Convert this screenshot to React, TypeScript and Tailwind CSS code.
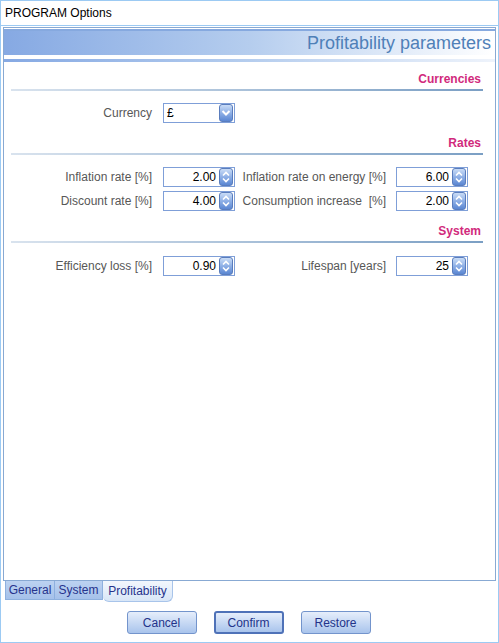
import React from 'react'

const font = { fontFamily: '"Liberation Sans", Arial, sans-serif' }

function Spinner() {
  return (
    <span className="w-[14px] h-[18px] rounded-[3px] border border-[#5a7dbd] bg-gradient-to-b from-[#c9dcf6] via-[#8fb0e6] to-[#5a86d2] flex flex-col items-center justify-center">
      <svg width="10" height="14" viewBox="0 0 10 14">
        <path d="M2 5.5 L5 2.5 L8 5.5" fill="none" stroke="#ffffff" strokeWidth="1.6" />
        <path d="M2 8.5 L5 11.5 L8 8.5" fill="none" stroke="#ffffff" strokeWidth="1.6" />
      </svg>
    </span>
  )
}

function DropButton() {
  return (
    <span className="w-[14px] h-[18px] rounded-[3px] border border-[#5a7dbd] bg-gradient-to-b from-[#c9dcf6] via-[#8fb0e6] to-[#5a86d2] flex items-center justify-center">
      <svg width="10" height="10" viewBox="0 0 10 10">
        <path d="M1.5 3 L5 6.5 L8.5 3" fill="none" stroke="#ffffff" strokeWidth="2" />
      </svg>
    </span>
  )
}

function NumField({ value }: { value: string }) {
  return (
    <div className="w-[72px] h-[20px] border border-[#7f9fd8] bg-white flex items-center justify-end pr-[1px]">
      <span className="text-[12px] text-black mr-[3px]">{value}</span>
      <Spinner />
    </div>
  )
}

function Section({ title }: { title: string }) {
  return (
    <div className="flex flex-col">
      <div className="h-[14px] leading-[14px] text-right pr-[2px] text-[12px] font-bold text-[#d12a7c]">{title}</div>
      <div className="mt-[3px] h-[2px] bg-gradient-to-r from-[#d9e3ee] to-[#7b9fc4]" />
    </div>
  )
}

function Row({ l1, v1, l2, v2 }: { l1: string; v1: string; l2?: string; v2?: string }) {
  return (
    <div className="flex items-center h-[20px] text-[12px] text-[#575757]">
      <span className="w-[141px] text-right whitespace-pre">{l1}</span>
      <div className="ml-[11px]">
        <NumField value={v1} />
      </div>
      {l2 && (
        <>
          <span className="w-[151px] text-right whitespace-pre">{l2}</span>
          <div className="ml-[10px]">
            <NumField value={v2 ?? ''} />
          </div>
        </>
      )}
    </div>
  )
}

export default function App() {
  return (
    <div className="w-[499px] h-[643px] bg-white border border-[#9ccaf3] flex flex-col" style={font}>
      <div className="h-[25px] pl-[4px] flex items-center text-[12px] text-black border-b border-[#9ccaf3]">
        PROGRAM Options
      </div>

      <div className="flex-1 flex flex-col px-[2px] pt-[1px]">
        <div className="h-[554px] border border-[#88a9d3] flex flex-col">
          <div className="mt-[1px] h-[26px] border-t-2 border-[#86a9df] bg-gradient-to-r from-[#86a9e3] via-[#b5cdee] to-white flex items-center justify-end pr-[4px]">
            <span className="text-[18px] text-[#4f80b8] leading-none">Profitability parameters</span>
          </div>
          <div className="mt-[4px] h-[3px] bg-gradient-to-r from-[#86a9e3] via-[#b5cdee] to-[#eef3fb]" />

          <div className="flex flex-col pl-[7px] pr-[12px] pt-[10px]">
            <Section title="Currencies" />
            <div className="mt-[12px] flex items-center h-[20px] text-[12px] text-[#575757]">
              <span className="w-[141px] text-right">Currency</span>
              <div className="ml-[11px] w-[72px] h-[20px] border border-[#7f9fd8] bg-white flex items-center justify-between pl-[3px] pr-[1px]">
                <span className="text-[12px] text-black">£</span>
                <DropButton />
              </div>
            </div>

            <div className="mt-[13px]">
              <Section title="Rates" />
            </div>
            <div className="mt-[12px] flex flex-col gap-[4px]">
              <Row l1="Inflation rate [%]" v1="2.00" l2="Inflation rate on energy [%]" v2="6.00" />
              <Row l1="Discount rate [%]" v1="4.00" l2="Consumption increase  [%]" v2="2.00" />
            </div>

            <div className="mt-[13px]">
              <Section title="System" />
            </div>
            <div className="mt-[13px]">
              <Row l1="Efficiency loss [%]" v1="0.90" l2="Lifespan [years]" v2="25" />
            </div>
          </div>
        </div>

        <div className="flex items-start pl-[2px] text-[12px] text-[#26338c]">
          <div className="h-[19px] w-[50px] border border-t-0 border-[#8eb0de] bg-gradient-to-b from-[#bcd2f1] to-[#a5c1ea] flex items-center justify-center">
            General
          </div>
          <div className="h-[19px] w-[48px] border border-t-0 border-l-0 border-[#8eb0de] bg-gradient-to-b from-[#bcd2f1] to-[#a5c1ea] flex items-center justify-center">
            System
          </div>
          <div className="h-[21px] w-[70px] border border-t-0 border-l-0 border-[#a8c4ea] rounded-b-[6px] bg-gradient-to-b from-[#f2f7fd] to-[#d8e6f7] flex items-center justify-center">
            Profitability
          </div>
        </div>

        <div className="flex justify-center gap-[17px] mt-[9px] pr-[2px] text-[12px] text-[#23338a]">
          <button className="w-[70px] h-[23px] rounded-[3px] border border-[#7394cc] bg-gradient-to-b from-[#e6eefb] to-[#a9c4ec]">
            Cancel
          </button>
          <button className="w-[70px] h-[23px] rounded-[3px] border-2 border-[#4f72b8] bg-gradient-to-b from-[#e6eefb] to-[#a9c4ec]">
            Confirm
          </button>
          <button className="w-[70px] h-[23px] rounded-[3px] border border-[#7394cc] bg-gradient-to-b from-[#e6eefb] to-[#a9c4ec]">
            Restore
          </button>
        </div>
      </div>
    </div>
  )
}
